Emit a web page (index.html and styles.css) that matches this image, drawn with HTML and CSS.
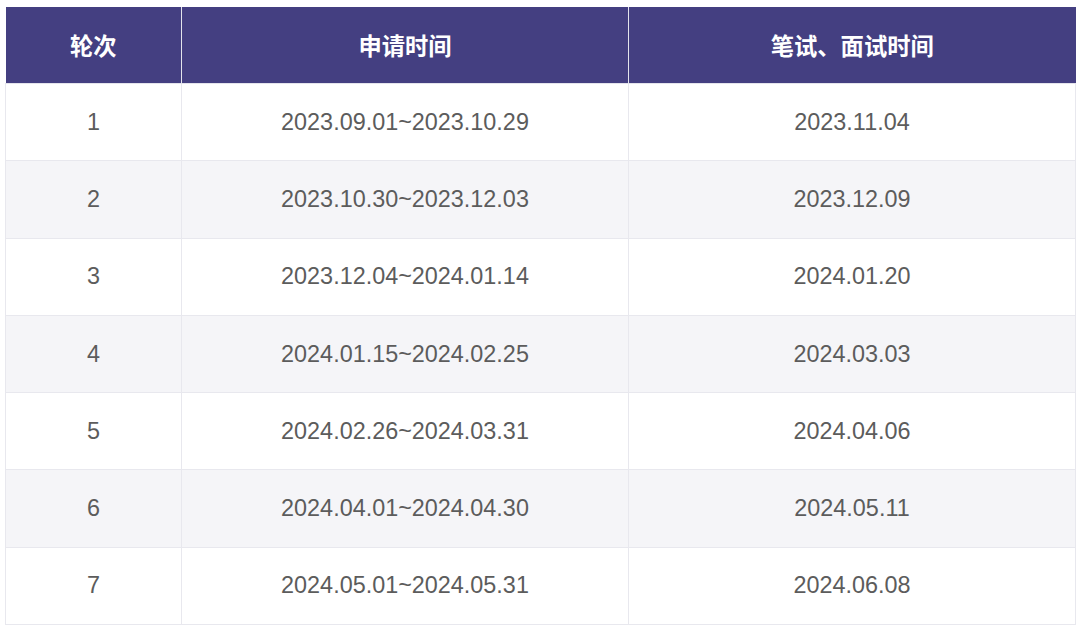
FILE: index.html
```html
<!DOCTYPE html>
<html lang="zh">
<head>
<meta charset="utf-8">
<link rel="stylesheet" href="styles.css">
</head>
<body>
<table class="schedule">
  <colgroup>
    <col class="c1"><col class="c2"><col class="c3">
  </colgroup>
  <thead>
    <tr><th>轮次</th><th>申请时间</th><th>笔试、面试时间</th></tr>
  </thead>
  <tbody>
    <tr><td>1</td><td>2023.09.01~2023.10.29</td><td>2023.11.04</td></tr>
    <tr><td>2</td><td>2023.10.30~2023.12.03</td><td>2023.12.09</td></tr>
    <tr><td>3</td><td>2023.12.04~2024.01.14</td><td>2024.01.20</td></tr>
    <tr><td>4</td><td>2024.01.15~2024.02.25</td><td>2024.03.03</td></tr>
    <tr><td>5</td><td>2024.02.26~2024.03.31</td><td>2024.04.06</td></tr>
    <tr><td>6</td><td>2024.04.01~2024.04.30</td><td>2024.05.11</td></tr>
    <tr><td>7</td><td>2024.05.01~2024.05.31</td><td>2024.06.08</td></tr>
  </tbody>
</table>
</body>
</html>
```
FILE: styles.css
```css
html, body {
  margin: 0;
  padding: 0;
  background: #ffffff;
}
body {
  padding: 7px 0 0 5px;
  font-family: "Liberation Sans", Arial, "Noto Sans CJK SC", sans-serif;
}
.schedule {
  width: 1070px;
  border-collapse: collapse;
  table-layout: fixed;
}
.c1 { width: 176px; }
.c2 { width: 447px; }
.c3 { width: 447px; }
.schedule th {
  height: 76px;
  padding: 0;
  background: #443f81;
  color: #ffffff;
  font-family: "Noto Sans CJK SC", "Liberation Sans", sans-serif;
  font-weight: 700;
  font-size: 23.3px;
  text-align: center;
  vertical-align: middle;
  border: 1px solid #e4e4ec;
  border-top: none;
}
.schedule th:first-child { border-left: none; }
.schedule th:last-child { border-right: none; }
.schedule td {
  height: 76.3px;
  padding: 0;
  color: #5c5c5c;
  font-size: 23.4px;
  text-align: center;
  vertical-align: middle;
  border: 1px solid #e8e8ee;
}
.schedule tbody tr:nth-child(even) td {
  background: #f5f5f8;
}
```
